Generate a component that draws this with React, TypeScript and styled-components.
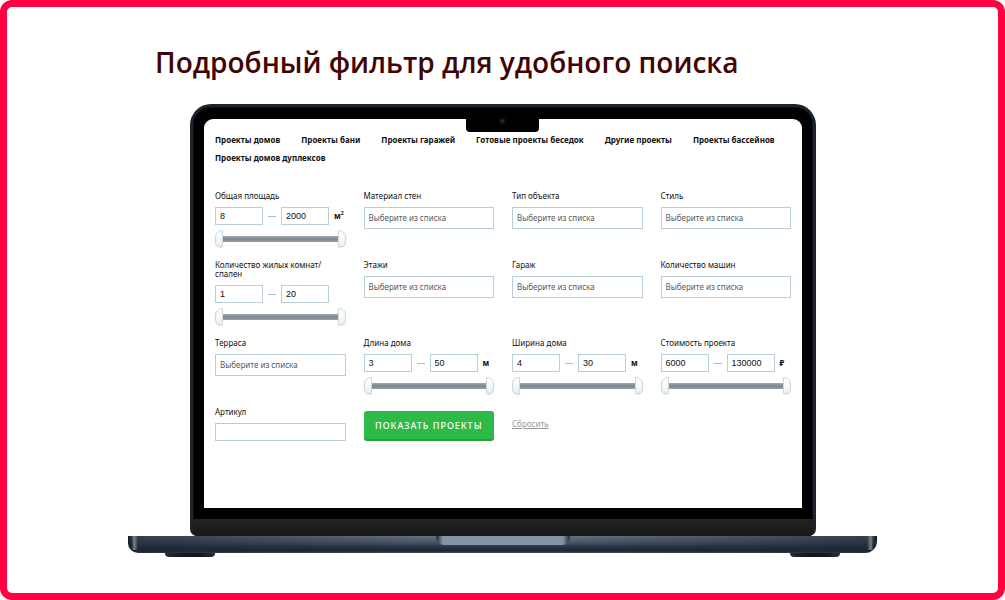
import React, { useState } from "react";
import styled, { createGlobalStyle, css } from "styled-components";

const GlobalStyle = createGlobalStyle`
  *, *::before, *::after { box-sizing: border-box; }
  body { margin: 0; background: #fff; font-family: "Noto Sans", "Open Sans", sans-serif; }
`;

const Frame = styled.main`
  min-height: 100vh;
  border: 7px solid #ff0040;
  border-radius: 12px;
  background: #fff;
  padding: 36px 24px 36px;
`;

const Content = styled.div`
  width: 100%;
  max-width: 749px;
  margin: 0 auto;
`;

const Title = styled.h1`
  margin: 0 0 23px 27px;
  font: 600 28px/38px "Open Sans", "Noto Sans", sans-serif;
  color: #420304;
`;

const Lid = styled.div`
  margin: 0 61px 0 62px;
  padding: 12px 11px 0;
  border: 3px solid #1b242d;
  border-bottom-width: 0;
  border-radius: 21px 21px 7px 7px;
  background: #000;
  box-shadow: inset 0 0 0 1px #0b0f14;
`;

const Screen = styled.section`
  position: relative;
  min-height: 389px;
  padding: 12px 11px 48px;
  border-radius: 9px 9px 0 0;
  background: #fff;
`;

const CameraNotch = styled.div`
  position: absolute;
  top: -1px;
  left: 50%;
  width: 73px;
  height: 14px;
  margin-left: -37px;
  border-radius: 0 0 4px 4px;
  background: radial-gradient(circle at 50% 3px, #1c3050 0 1px, #0e1013 2px 3px, #000 4px);
`;

const Chin = styled.div`
  height: 17px;
  margin: 11px -11px 0;
  border-radius: 0 0 5px 5px;
  background: linear-gradient(#222, #191919);
`;

const Base = styled.div`
  display: flex;
  justify-content: center;
  height: 17px;
  border-radius: 0 0 12px 10px;
  background:
    linear-gradient(90deg, #10151d 0, #10151d00 4px, #7d828a 6px, #7d828a00 10px) no-repeat 0 0 / 12px 14px,
    linear-gradient(270deg, #10151d 0, #10151d00 4px, #7d828a 6px, #7d828a00 10px) no-repeat 100% 0 / 12px 14px,
    linear-gradient(90deg, #1b2431aa, #1b243100 40%, #1b243100 60%, #1b2431aa),
    linear-gradient(#657083 0, #4b5667 35%, #2a3341 65%, #1d2530 88%, #465267 100%);
`;

const Groove = styled.div`
  width: 134px;
  height: 9px;
  border-radius: 0 0 8px 8px;
  background: linear-gradient(90deg, #1f2733 0, #8492a7 7px, #8492a7 127px, #1f2733 134px);
`;

const Feet = styled.div`
  display: flex;
  justify-content: space-between;
  padding: 0 37px;
`;

const Foot = styled.span`
  width: 50px;
  height: 4px;
  border-radius: 0 0 9px 9px;
  background: linear-gradient(90deg, #272e39, #17181b 30%, #17181b 70%, #272e39);
`;

const Nav = styled.nav`
  display: flex;
  flex-wrap: wrap;
  column-gap: 21px;
`;

const NavLink = styled.a`
  font-size: 8px;
  font-weight: 700;
  line-height: 18px;
  color: #111;
  text-decoration: none;
  white-space: nowrap;
`;

const Filters = styled.form`
  display: grid;
  grid-template-columns: repeat(4, minmax(0, 1fr));
  gap: 13px 18px;
  margin-top: 24px;
`;

const Group = styled.div`
  display: flex;
  flex-direction: column;
  min-width: 0;
  margin: 0;
`;

const labelText = css`
  margin-bottom: 7px;
  font-size: 8px;
  line-height: 9px;
  color: #111;
`;

const Label = styled.label`
  ${labelText}
`;

const Caption = styled.span`
  ${labelText}
`;

const field = css`
  border: 1px solid #b9ced8;
  border-radius: 0;
  background: #fff;
  font-family: inherit;
  font-size: 8px;
  padding: 0 4px;
  outline-color: #7fa6b8;
`;

const Select = styled.select`
  ${field}
  appearance: none;
  width: 100%;
  height: 22px;
  padding-bottom: 2px;
  color: #555b5f;
`;

const TextInput = styled.input`
  ${field}
  width: 100%;
  height: 18px;
  color: #111;
`;

const RangeRow = styled.div`
  display: flex;
  align-items: center;
`;

const NumberInput = styled.input`
  ${field}
  width: 48px;
  height: 18px;
  color: #111;
  font-family: "Liberation Sans", Arial, sans-serif;
  font-size: 9px;
`;

const Dash = styled.span`
  width: 8px;
  height: 1px;
  margin: 0 5px;
  background: #a9bcc4;
`;

const Unit = styled.span`
  margin-left: 5px;
  padding-bottom: 2px;
  font-size: 8px;
  font-weight: 700;
  line-height: 9px;
  color: #111;

  sup {
    font-size: 5px;
    line-height: 1px;
  }
`;

const Slider = styled.div`
  display: grid;
  height: 17px;
  margin-top: 5px;
  background: linear-gradient(#a3abae, #7d878b 50%, #99a1a4) no-repeat center / calc(100% - 14px) 6px;
`;

const Thumb = styled.input<{ $side: "low" | "high" }>`
  grid-area: 1 / 1;
  appearance: none;
  width: 100%;
  height: 17px;
  margin: 0;
  background: none;
  pointer-events: none;

  &::-webkit-slider-thumb {
    appearance: none;
    width: 8px;
    height: 17px;
    border: 1px solid #cad8df;
    border-radius: ${(p) => (p.$side === "low" ? "7px 1px 1px 5px" : "1px 7px 5px 1px")};
    background: linear-gradient(#fff, #eef0f1);
    box-shadow: 0 1px 1px #a8bcc655;
    pointer-events: auto;
  }
`;

const Submit = styled.button`
  align-self: start;
  height: 30px;
  margin-top: 4px;
  padding: 0;
  border: 0;
  border-bottom: 2px solid #25a03c;
  border-radius: 3px;
  background: #2dba48;
  color: #fff;
  font-family: inherit;
  font-size: 9px;
  font-weight: 500;
  letter-spacing: 1px;
  white-space: nowrap;
`;

const Reset = styled.button`
  justify-self: start;
  align-self: start;
  margin-top: 11px;
  padding: 0;
  border: 0;
  background: none;
  color: #999;
  font-family: inherit;
  font-size: 8px;
  line-height: 12px;
  text-decoration: underline;
`;

const sections = [
  "Проекты домов",
  "Проекты бани",
  "Проекты гаражей",
  "Готовые проекты беседок",
  "Другие проекты",
  "Проекты бассейнов",
  "Проекты домов дуплексов",
];

function SelectFilter({ id, label }: { id: string; label: string }) {
  return (
    <Group>
      <Label htmlFor={id}>{label}</Label>
      <Select id={id}>
        <option>Выберите из списка</option>
      </Select>
    </Group>
  );
}

interface RangeProps {
  id: string;
  label: string;
  min: number;
  max: number;
  unit?: React.ReactNode;
}

function RangeFilter({ id, label, min, max, unit }: RangeProps) {
  const [low, setLow] = useState(min);
  const [high, setHigh] = useState(max);
  const changeLow = (e: React.ChangeEvent<HTMLInputElement>) => setLow(Math.min(Number(e.target.value) || min, high));
  const changeHigh = (e: React.ChangeEvent<HTMLInputElement>) => setHigh(Math.max(Number(e.target.value) || max, low));
  return (
    <Group role="group" aria-labelledby={id}>
      <Caption id={id}>{label}</Caption>
      <RangeRow>
        <NumberInput aria-label={`${label}, от`} value={low} onChange={changeLow} />
        <Dash />
        <NumberInput aria-label={`${label}, до`} value={high} onChange={changeHigh} />
        {unit && <Unit>{unit}</Unit>}
      </RangeRow>
      <Slider>
        <Thumb $side="low" type="range" aria-label={`${label}, от`} min={min} max={max} value={low} onChange={changeLow} />
        <Thumb $side="high" type="range" aria-label={`${label}, до`} min={min} max={max} value={high} onChange={changeHigh} />
      </Slider>
    </Group>
  );
}

export default function App() {
  return (
    <>
      <GlobalStyle />
      <Frame>
        <Content>
          <Title>Подробный фильтр для удобного поиска</Title>
          <Lid>
            <Screen>
              <CameraNotch />
              <Nav>
                {sections.map((name) => (
                  <NavLink key={name} href="#">{name}</NavLink>
                ))}
              </Nav>
              <Filters onSubmit={(e) => e.preventDefault()}>
                <RangeFilter id="area" label="Общая площадь" min={8} max={2000} unit={<>м<sup>2</sup></>} />
                <SelectFilter id="walls" label="Материал стен" />
                <SelectFilter id="type" label="Тип объекта" />
                <SelectFilter id="style" label="Стиль" />
                <RangeFilter id="rooms" label="Количество жилых комнат/спален" min={1} max={20} />
                <SelectFilter id="floors" label="Этажи" />
                <SelectFilter id="garage" label="Гараж" />
                <SelectFilter id="cars" label="Количество машин" />
                <SelectFilter id="terrace" label="Терраса" />
                <RangeFilter id="length" label="Длина дома" min={3} max={50} unit="м" />
                <RangeFilter id="width" label="Ширина дома" min={4} max={30} unit="м" />
                <RangeFilter id="price" label="Стоимость проекта" min={6000} max={130000} unit="₽" />
                <Group>
                  <Label htmlFor="sku">Артикул</Label>
                  <TextInput id="sku" />
                </Group>
                <Submit type="submit">ПОКАЗАТЬ ПРОЕКТЫ</Submit>
                <Reset type="reset">Сбросить</Reset>
              </Filters>
            </Screen>
            <Chin />
          </Lid>
          <Base>
            <Groove />
          </Base>
          <Feet>
            <Foot />
            <Foot />
          </Feet>
        </Content>
      </Frame>
    </>
  );
}
